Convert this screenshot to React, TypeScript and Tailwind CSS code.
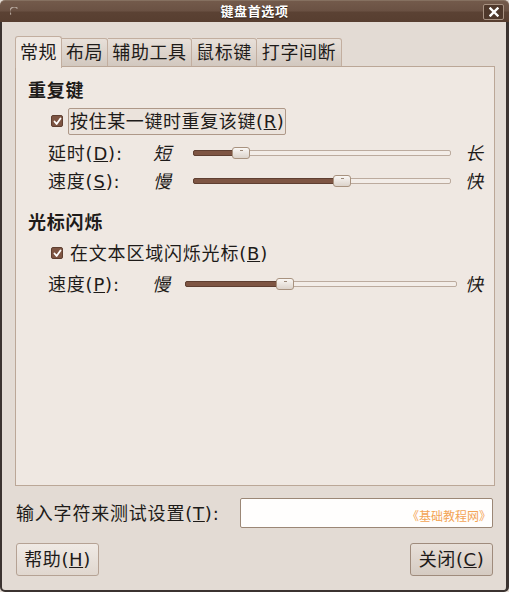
import React from "react"

const font = "font-['DejaVu_Sans','Noto_Sans_CJK_SC',sans-serif]"

interface SliderProps {
  width: number
  thumb: number
}

function Slider({ width, thumb }: SliderProps) {
  return (
    <div className="relative h-[12px] flex items-center" style={{ width }}>
      <div className="w-full h-[6px] rounded-[2px] border border-[#bcab9e] bg-[#f3ede8]" />
      <div
        className="absolute left-0 top-[3px] h-[6px] rounded-l-[2px] bg-[#7e5543] border border-[#5f3f31]"
        style={{ width: thumb + 4 }}
      />
      <div
        className="absolute top-0 h-[12px] w-[18px] rounded-[3px] border border-[#a8927f] bg-linear-to-b from-[#faf7f4] to-[#dcd3cb] flex justify-center"
        style={{ left: thumb }}
      >
        <div className="mt-[2px] w-[3px] h-px bg-[#9b8878]" />
      </div>
    </div>
  )
}

function Check() {
  return (
    <div className="w-[12px] h-[12px] shrink-0 rounded-[2px] bg-[#7e5543] border border-[#5f3f31] flex items-center justify-center">
      <svg width="9" height="9" viewBox="0 0 9 9">
        <path d="M1.5 4.5 L3.6 7 L7.5 1.5" stroke="#fff" strokeWidth="1.8" fill="none" strokeLinecap="round" strokeLinejoin="round" />
      </svg>
    </div>
  )
}

const tabs = ["常规", "布局", "辅助工具", "鼠标键", "打字间断"]
const tabWidths = ["w-[47px]", "w-[46px]", "w-[84px]", "w-[65px]", "w-[85px]"]

export default function App() {
  return (
    <div className={`w-[509px] h-[592px] flex flex-col bg-[#e3dbd4] text-[#1e1b19] whitespace-nowrap ${font}`}>
      {/* title bar */}
      <div className="h-[22px] shrink-0 relative flex items-center justify-center rounded-t-[5px] border-t border-[#857060] bg-[linear-gradient(to_bottom,#735a4b_0%,#6a5143_48%,#5b4234_52%,#573e30_100%)]">
        <svg className="absolute left-[10px] top-[6px]" width="9" height="9" viewBox="0 0 9 9">
          <path d="M1 7.5 A3.8 3.8 0 0 1 7.5 1.5" stroke="#b8aaa0" strokeWidth="1.2" fill="none" />
        </svg>
        <span className="text-white font-bold text-[13px] tracking-[0.6px] [text-shadow:0_1px_1px_#2c1e16]">键盘首选项</span>
        <div className="absolute right-[5px] top-[3px] w-[21px] h-[16px] rounded-[2px] border border-[#a89282] bg-[#4f382b] flex items-center justify-center">
          <svg width="10" height="10" viewBox="0 0 10 10">
            <path d="M1.5 1.5 L8.5 8.5 M8.5 1.5 L1.5 8.5" stroke="#fff" strokeWidth="2.4" strokeLinecap="square" />
          </svg>
        </div>
      </div>

      {/* body */}
      <div className="flex-1 flex flex-col border-l-2 border-r-[3px] border-b-2 border-[#3b3330] rounded-b-[5px] pl-[13px] pt-[13px]">
        <div className="flex items-end h-[32px] text-[18px] tracking-[0.6px]">
          {tabs.map((t, i) =>
            i === 0 ? (
              <div
                key={t}
                className={`${tabWidths[i]} h-[32px] relative z-10 -mb-px border border-b-0 border-[#c2ae9f] rounded-t-[3px] bg-[#efe8e2] flex items-center justify-center`}
              >
                {t}
              </div>
            ) : (
              <div
                key={t}
                className={`${tabWidths[i]} h-[29px] border border-l-0 border-[#c2ae9f] rounded-tr-[3px] bg-linear-to-b from-[#e8e0d9] to-[#d2c8bf] flex items-center justify-center`}
              >
                {t}
              </div>
            )
          )}
        </div>

        <div className="w-[480px] h-[420px] -mt-px border border-[#bba797] bg-[#efe8e2] flex flex-col pt-[11px] text-[18px] tracking-[0.8px]">
          <div className="h-[24px] pl-[12px] flex items-center font-bold">重复键</div>
          <div className="h-[28px] mt-[5px] pl-[35px] flex items-center">
            <Check />
            <div className="ml-[5px] h-[27px] px-[1px] border border-[#ae9888] rounded-[2px] bg-[#ebe3dc] flex items-center tracking-[0.6px]">
              按住某一键时重复该键(<u>R</u>)
            </div>
          </div>
          <div className="h-[24px] mt-[6px] pl-[32px] flex items-center">
            <span className="w-[105px]">
              延时(<u>D</u>):
            </span>
            <span className="w-[40px] italic">短</span>
            <Slider width={258} thumb={39} />
            <span className="ml-[14px] italic">长</span>
          </div>
          <div className="h-[24px] mt-[4px] pl-[32px] flex items-center">
            <span className="w-[105px]">
              速度(<u>S</u>):
            </span>
            <span className="w-[40px] italic">慢</span>
            <Slider width={258} thumb={140} />
            <span className="ml-[14px] italic">快</span>
          </div>

          <div className="h-[24px] mt-[17px] pl-[12px] flex items-center font-bold">光标闪烁</div>
          <div className="h-[28px] mt-[5px] pl-[35px] flex items-center">
            <Check />
            <span className="ml-[7px]">
              在文本区域闪烁光标(<u>B</u>)
            </span>
          </div>
          <div className="h-[24px] mt-[5px] pl-[32px] flex items-center">
            <span className="w-[104px]">
              速度(<u>P</u>):
            </span>
            <span className="w-[33px] italic">慢</span>
            <Slider width={272} thumb={91} />
            <span className="ml-[8px] italic">快</span>
          </div>
        </div>

        <div className="mt-[12px] flex items-center pl-[1px] w-[478px] justify-between text-[18px] tracking-[0.8px]">
          <span>
            输入字符来测试设置(<u>T</u>):
          </span>
          <div className="relative w-[253px] h-[30px] rounded-[2px] border border-[#9b8776] bg-[#fffefd]">
            <span className="absolute right-[1px] bottom-[1px] text-[12px] tracking-normal text-[#f3a455]">《基础教程网》</span>
          </div>
        </div>

        <div className="mt-[15px] pl-[1px] w-[478px] flex justify-between text-[18px] tracking-[0.6px]">
          <button className="w-[83px] h-[33px] rounded-[3px] border border-[#b5a294] bg-linear-to-b from-[#f0eae5] to-[#e0d7cf] flex items-center justify-center">
            帮助(<u>H</u>)
          </button>
          <button className="w-[83px] h-[33px] rounded-[3px] border border-[#9f8b7c] bg-linear-to-b from-[#e8e0d9] to-[#d5cbc2] flex items-center justify-center">
            关闭(<u>C</u>)
          </button>
        </div>
      </div>
    </div>
  )
}
